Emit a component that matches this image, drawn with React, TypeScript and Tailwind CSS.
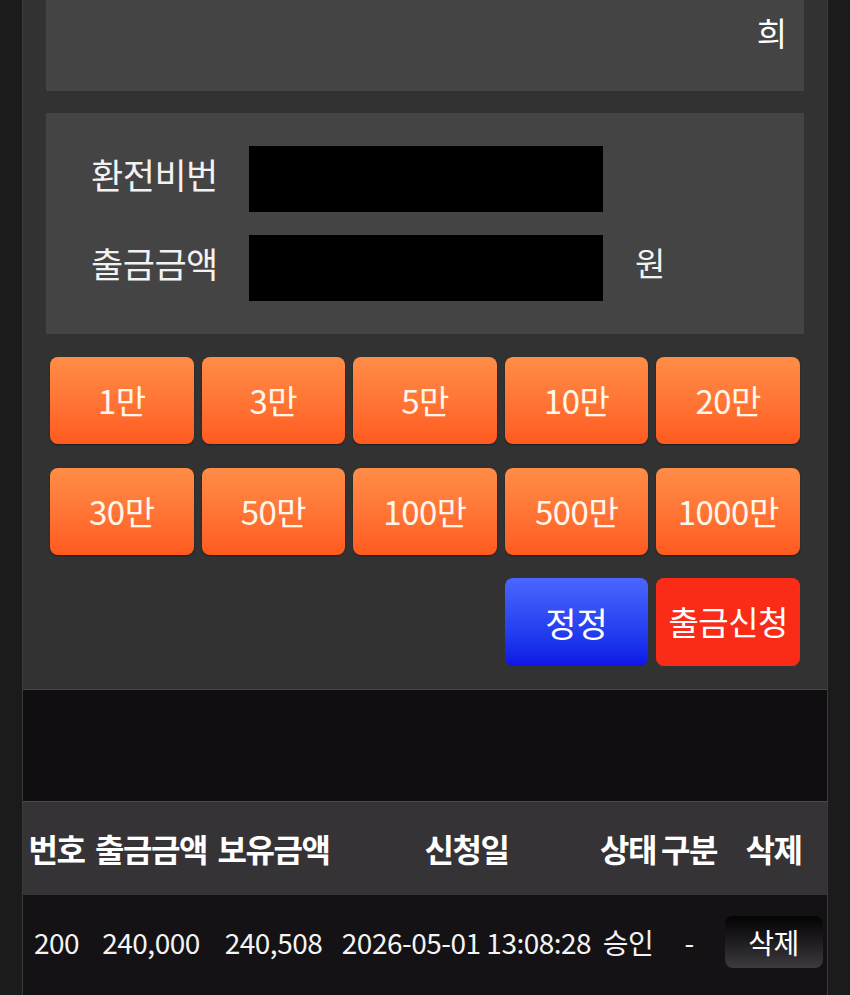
const font = "font-['Noto_Sans_CJK_KR','Noto_Sans',sans-serif]";

const amounts = ["1만", "3만", "5만", "10만", "20만", "30만", "50만", "100만", "500만", "1000만"];

function AmountButton({ label }: { label: string }) {
    return (
        <button className="h-[87px] rounded-lg bg-gradient-to-b from-[#ff8d47] to-[#ff5a1f] text-[33px] tracking-[-0.5px] text-[#fff6ec] shadow-[0_1px_2px_rgba(0,0,0,0.4)]">
            {label}
        </button>
    );
}

function Th({ children }: { children: React.ReactNode }) {
    return (
        <th className="p-0 font-bold">
            <div className="flex justify-center whitespace-nowrap">{children}</div>
        </th>
    );
}

export default function App() {
    return (
        <div className={`min-h-[995px] bg-[#1b1b1b] ${font}`}>
            <div className="mx-[22px] border-x border-[#3a3a3a]">
                {/* form panel */}
                <div className="bg-[#323232] px-[23px] pb-[23px] border-b border-[#474747]">
                    <div className="h-[91px] bg-[#444444] flex justify-end pr-[17px] pt-[8px] text-[33px] text-white">희</div>

                    <div className="mt-[22px] bg-[#444444] pl-[45px] py-[33px] flex flex-col gap-[23px]">
                        <div className="flex items-center">
                            <span className="w-[158px] mb-[10px] text-[35px] tracking-[-0.5px] text-[#f2f2f2]">환전비번</span>
                            <div className="w-[354px] h-[66px] bg-black" />
                        </div>
                        <div className="flex items-center">
                            <span className="w-[158px] mb-[10px] text-[35px] tracking-[-0.5px] text-[#f2f2f2]">출금금액</span>
                            <div className="w-[354px] h-[66px] bg-black" />
                            <span className="ml-[32px] mb-[10px] text-[33px] text-[#f2f2f2]">원</span>
                        </div>
                    </div>

                    <div className="mt-[23px] px-[4px] grid grid-cols-5 gap-x-[8px] gap-y-[24px]">
                        {amounts.map((a) => (
                            <AmountButton key={a} label={a} />
                        ))}
                    </div>

                    <div className="mt-[23px] px-[4px] grid grid-cols-5 gap-x-[8px]">
                        <div className="col-span-3" />
                        <button className="h-[88px] rounded-lg bg-gradient-to-b from-[#4b66ff] to-[#0f12e6] text-[34px] text-white">정정</button>
                        <button className="h-[88px] rounded-lg bg-[#fb2c17] text-[33px] tracking-[-0.5px] text-white">출금신청</button>
                    </div>
                </div>

                <div className="h-[111px] bg-[#100e10]" />

                {/* history table */}
                <table className="w-full table-fixed border-collapse">
                    <colgroup>
                        <col className="w-[67px]" />
                        <col className="w-[122px]" />
                        <col className="w-[123px]" />
                        <col className="w-[263px]" />
                        <col className="w-[60px]" />
                        <col className="w-[62px]" />
                        <col />
                    </colgroup>
                    <thead>
                        <tr className="h-[93px] bg-[#363337] border-t border-[#4a474b] text-[32px] tracking-[-1.5px] text-white">
                            <Th>번호</Th>
                            <Th>출금금액</Th>
                            <Th>보유금액</Th>
                            <Th>신청일</Th>
                            <Th>상태</Th>
                            <Th>구분</Th>
                            <Th>삭제</Th>
                        </tr>
                    </thead>
                    <tbody>
                        <tr className="h-[100px] bg-[#151215] text-[28px] tracking-[-0.5px] text-[#f4f4f4] text-center">
                            <td className="pb-[5px]">200</td>
                            <td className="pb-[5px]">240,000</td>
                            <td className="pb-[5px]">240,508</td>
                            <td className="pb-[5px] whitespace-nowrap">2026-05-01 13:08:28</td>
                            <td className="pb-[5px]">승인</td>
                            <td className="pb-[5px]">-</td>
                            <td>
                                <button className="w-[98px] h-[52px] mb-[6px] rounded-lg bg-gradient-to-b from-[#050405] to-[#3d3b3d] text-[28px] text-white">삭제</button>
                            </td>
                        </tr>
                    </tbody>
                </table>
            </div>
        </div>
    );
}
